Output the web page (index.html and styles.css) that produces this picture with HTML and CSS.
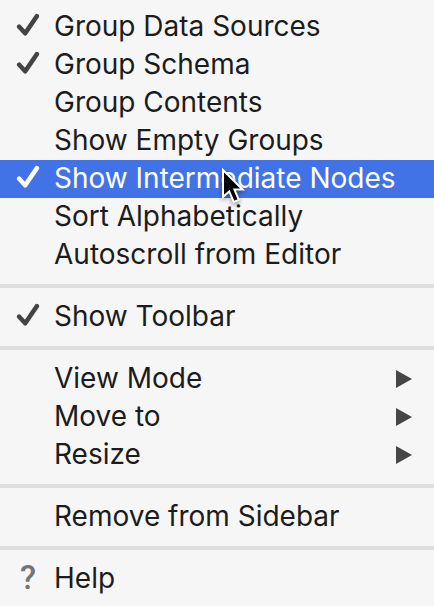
FILE: index.html
```html
<!DOCTYPE html>
<html lang="en">
<head>
<meta charset="utf-8">
<meta name="viewport" content="width=device-width, initial-scale=1">
<title>View options</title>
<link rel="stylesheet" href="styles.css">
</head>
<body>
<svg class="symbols" aria-hidden="true">
  <symbol id="check" viewBox="0 0 24 24"><path d="M3.2 13.8 9.2 20.2 20.8 3.2" fill="none" stroke="currentColor" stroke-width="4.6" stroke-linecap="round" stroke-linejoin="round"/></symbol>
  <symbol id="arrow" viewBox="0 0 16 18"><path d="M0 0 16 9 0 18Z" fill="currentColor"/></symbol>
</svg>
<div class="menu" role="menu">
  <div class="group" role="group">
    <button class="item" role="menuitemcheckbox" aria-checked="true"><span class="mark"><svg class="check"><use href="#check"/></svg></span><span class="label">Group Data Sources</span></button>
    <button class="item" role="menuitemcheckbox" aria-checked="true"><span class="mark"><svg class="check"><use href="#check"/></svg></span><span class="label">Group Schema</span></button>
    <button class="item" role="menuitemcheckbox" aria-checked="false"><span class="mark"></span><span class="label">Group Contents</span></button>
    <button class="item" role="menuitemcheckbox" aria-checked="false"><span class="mark"></span><span class="label">Show Empty Groups</span></button>
    <button class="item selected" role="menuitemcheckbox" aria-checked="true"><span class="mark"><svg class="check"><use href="#check"/></svg></span><span class="label">Show Intermediate Nodes</span>
      <svg class="pointer" viewBox="0 0 26 40" aria-hidden="true"><path d="M2 2V29L8.2 23.4 12.8 34 17.8 31.8 13.4 21.6H21.6Z" fill="#000" stroke="#fff" stroke-width="2"/></svg>
    </button>
    <button class="item" role="menuitemcheckbox" aria-checked="false"><span class="mark"></span><span class="label">Sort Alphabetically</span></button>
    <button class="item" role="menuitemcheckbox" aria-checked="false"><span class="mark"></span><span class="label">Autoscroll from Editor</span></button>
  </div>
  <hr class="separator">
  <div class="group" role="group">
    <button class="item" role="menuitemcheckbox" aria-checked="true"><span class="mark"><svg class="check"><use href="#check"/></svg></span><span class="label">Show Toolbar</span></button>
  </div>
  <hr class="separator">
  <div class="group" role="group">
    <button class="item" role="menuitem" aria-haspopup="menu"><span class="mark"></span><span class="label">View Mode</span><svg class="arrow"><use href="#arrow"/></svg></button>
    <button class="item" role="menuitem" aria-haspopup="menu"><span class="mark"></span><span class="label">Move to</span><svg class="arrow"><use href="#arrow"/></svg></button>
    <button class="item" role="menuitem" aria-haspopup="menu"><span class="mark"></span><span class="label">Resize</span><svg class="arrow"><use href="#arrow"/></svg></button>
  </div>
  <hr class="separator">
  <div class="group" role="group">
    <button class="item" role="menuitem"><span class="mark"></span><span class="label">Remove from Sidebar</span></button>
  </div>
  <hr class="separator">
  <div class="group" role="group">
    <button class="item" role="menuitem"><span class="mark help" aria-hidden="true">?</span><span class="label">Help</span></button>
  </div>
</div>
</body>
</html>
```
FILE: styles.css
```css
* {
  box-sizing: border-box;
}

body {
  margin: 0;
  background: #f6f6f6;
}

.symbols {
  display: none;
}

.menu {
  padding: 8px 0;
  background: #f6f6f6;
  color: #1c1c1c;
  font-family: Inter, "Liberation Sans", sans-serif;
  font-size: 28px;
}

.item {
  position: relative;
  display: flex;
  align-items: center;
  width: 100%;
  height: 38px;
  padding: 0 22px 0 16px;
  border: 0;
  background: transparent;
  color: inherit;
  font: inherit;
  line-height: 36px;
  text-align: left;
  white-space: nowrap;
}

.selected {
  background: #4173e6;
  color: #fff;
}

.mark {
  display: flex;
  flex: none;
  align-items: center;
  width: 38px;
  height: 38px;
  padding-bottom: 4px;
  color: #444;
}

.selected .mark {
  color: #fff;
}

.check {
  width: 24px;
  height: 24px;
}

.help {
  padding: 0 0 2px 4px;
  color: #757575;
  font-family: Roboto, sans-serif;
  font-size: 33px;
  font-weight: 500;
}

.label {
  flex: 1;
  padding-bottom: 2px;
}

.arrow {
  flex: none;
  width: 16px;
  height: 18px;
  color: #464646;
}

.separator {
  height: 4px;
  margin: 10px 0;
  border: 0;
  background: #dedede;
}

.pointer {
  position: absolute;
  z-index: 1;
  top: 8px;
  left: 221px;
  width: 26px;
  height: 40px;
  filter: drop-shadow(0 2px 2px rgb(0 0 0 / 40%));
}
```
